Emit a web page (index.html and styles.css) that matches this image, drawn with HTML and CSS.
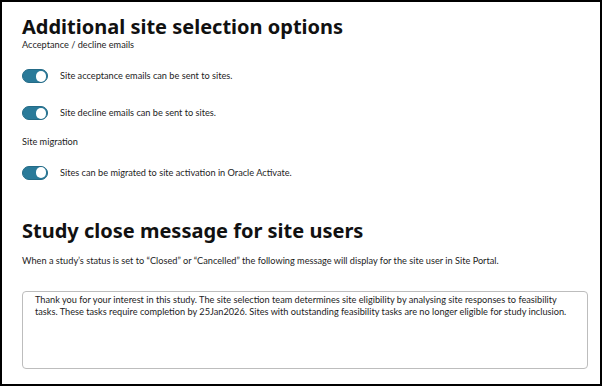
FILE: index.html
```html
<!DOCTYPE html>
<html lang="en">
<head>
<meta charset="utf-8">
<title>Site selection options</title>
<link rel="stylesheet" href="styles.css">
</head>
<body>
<div class="frame">
  <h1 class="title">Additional site selection options</h1>
  <div class="group-label">Acceptance / decline emails</div>
  <div class="toggle-row first">
    <span class="switch" role="switch" aria-checked="true"><span class="knob"></span></span>
    <span class="toggle-text">Site acceptance emails can be sent to sites.</span>
  </div>
  <div class="toggle-row second">
    <span class="switch" role="switch" aria-checked="true"><span class="knob"></span></span>
    <span class="toggle-text">Site decline emails can be sent to sites.</span>
  </div>
  <div class="group-label migration">Site migration</div>
  <div class="toggle-row first">
    <span class="switch" role="switch" aria-checked="true"><span class="knob"></span></span>
    <span class="toggle-text">Sites can be migrated to site activation in Oracle Activate.</span>
  </div>
  <h2 class="title second-title">Study close message for site users</h2>
  <p class="desc">When a study’s status is set to “Closed” or “Cancelled” the following message will display for the site user in Site Portal.</p>
  <textarea class="message" readonly>Thank you for your interest in this study. The site selection team determines site eligibility by analysing site responses to feasibility tasks. These tasks require completion by 25Jan2026. Sites with outstanding feasibility tasks are no longer eligible for study inclusion.</textarea>
</div>
</body>
</html>
```
FILE: styles.css
```css
html, body {
  margin: 0;
  padding: 0;
  background: #ffffff;
}

.frame {
  width: 602px;
  height: 386px;
  box-sizing: border-box;
  border: 2px solid #000000;
  padding: 13px 20px 0 20px;
  display: flex;
  flex-direction: column;
  align-items: flex-start;
  font-family: Lato, "Noto Sans", sans-serif;
  color: #1d1d1d;
  overflow: hidden;
}

.title {
  margin: 0;
  font-family: "Noto Sans", sans-serif;
  font-size: 20px;
  line-height: 24px;
  font-weight: 700;
  color: #111111;
}

.second-title {
  margin-top: 39.7px;
}

.group-label {
  font-size: 9.2px;
  line-height: 12px;
}

.group-label.migration {
  margin-top: 15.5px;
}

.toggle-row {
  display: flex;
  align-items: center;
  gap: 12px;
  height: 14px;
}

.toggle-row.first {
  margin-top: 18px;
}

.toggle-row.second {
  margin-top: 23px;
}

.switch {
  width: 26px;
  height: 14px;
  box-sizing: border-box;
  border-radius: 7px;
  background: #2a7a99;
  border: 1px solid #246b87;
  display: flex;
  align-items: center;
  justify-content: flex-end;
  padding-right: 1.5px;
}

.knob {
  width: 10px;
  height: 11px;
  border-radius: 5px;
  background: #ffffff;
}

.toggle-text {
  font-size: 9.2px;
  line-height: 12px;
}

.desc {
  margin: 12px 0 0 0;
  font-size: 9.2px;
  line-height: 12px;
}

.message {
  margin: 24px 0 0 0;
  width: 566px;
  height: 78px;
  box-sizing: border-box;
  border: 1px solid #bdbdbd;
  border-radius: 4px;
  padding: 2px 12px;
  font-family: Lato, "Noto Sans", sans-serif;
  font-size: 9.2px;
  line-height: 12px;
  color: #1d1d1d;
  resize: none;
  overflow: hidden;
  background: #ffffff;
  outline: none;
}
```
